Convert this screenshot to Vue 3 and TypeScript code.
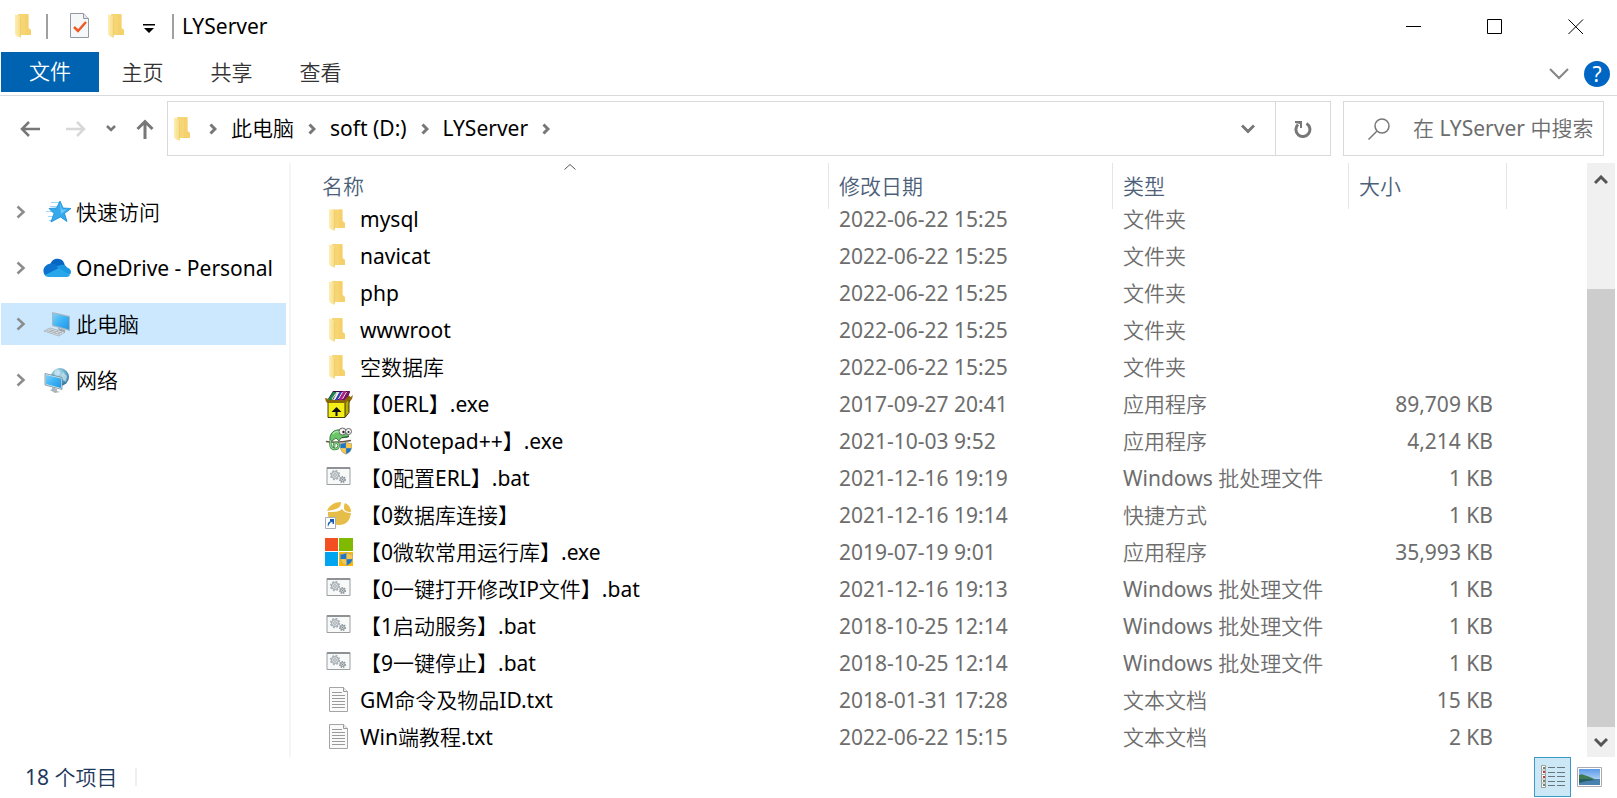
<script setup lang="ts">
import { ref } from 'vue'

interface Entry {
  name: string
  date: string
  type: string
  size: string
  icon: string
}

interface Place {
  label: string
  icon: string
}

const folderType = '文件夹'
const appType = '应用程序'
const batType = 'Windows 批处理文件'
const txtType = '文本文档'

const entries: Entry[] = [
  { name: 'mysql', date: '2022-06-22 15:25', type: folderType, size: '', icon: 'folder' },
  { name: 'navicat', date: '2022-06-22 15:25', type: folderType, size: '', icon: 'folder' },
  { name: 'php', date: '2022-06-22 15:25', type: folderType, size: '', icon: 'folder' },
  { name: 'wwwroot', date: '2022-06-22 15:25', type: folderType, size: '', icon: 'folder' },
  { name: '空数据库', date: '2022-06-22 15:25', type: folderType, size: '', icon: 'folder' },
  { name: '【0ERL】.exe', date: '2017-09-27 20:41', type: appType, size: '89,709 KB', icon: 'archive' },
  { name: '【0Notepad++】.exe', date: '2021-10-03 9:52', type: appType, size: '4,214 KB', icon: 'chameleon' },
  { name: '【0配置ERL】.bat', date: '2021-12-16 19:19', type: batType, size: '1 KB', icon: 'batch' },
  { name: '【0数据库连接】', date: '2021-12-16 19:14', type: '快捷方式', size: '1 KB', icon: 'database' },
  { name: '【0微软常用运行库】.exe', date: '2019-07-19 9:01', type: appType, size: '35,993 KB', icon: 'windows' },
  { name: '【0一键打开修改IP文件】.bat', date: '2021-12-16 19:13', type: batType, size: '1 KB', icon: 'batch' },
  { name: '【1启动服务】.bat', date: '2018-10-25 12:14', type: batType, size: '1 KB', icon: 'batch' },
  { name: '【9一键停止】.bat', date: '2018-10-25 12:14', type: batType, size: '1 KB', icon: 'batch' },
  { name: 'GM命令及物品ID.txt', date: '2018-01-31 17:28', type: txtType, size: '15 KB', icon: 'text' },
  { name: 'Win端教程.txt', date: '2022-06-22 15:15', type: txtType, size: '2 KB', icon: 'text' },
]

const places: Place[] = [
  { label: '快速访问', icon: 'star' },
  { label: 'OneDrive - Personal', icon: 'cloud' },
  { label: '此电脑', icon: 'computer' },
  { label: '网络', icon: 'network' },
]

const tabs = ['主页', '共享', '查看']
const crumbs = ['此电脑', 'soft (D:)', 'LYServer']
const selected = ref('此电脑')
const query = ref('')
</script>

<template>
  <div class="window">
    <svg class="defs" aria-hidden="true">
      <defs>
        <linearGradient id="front" x1="0" x2="1"><stop offset="0" stop-color="#fdeeb4" /><stop offset="1" stop-color="#f7dc85" /></linearGradient>
        <linearGradient id="screen" x1="0" y1="0" x2="1" y2="1"><stop offset="0" stop-color="#7fd0fb" /><stop offset="0.5" stop-color="#3db2f5" /><stop offset="1" stop-color="#2196e6" /></linearGradient>
        <linearGradient id="sky" x1="0" y1="0" x2="0" y2="1"><stop offset="0" stop-color="#5b9bea" /><stop offset="1" stop-color="#d9ebf8" /></linearGradient>
        <radialGradient id="globe" cx="0.4" cy="0.3" r="0.8"><stop offset="0" stop-color="#c4e7f5" /><stop offset="0.5" stop-color="#69abc9" /><stop offset="1" stop-color="#24648c" /></radialGradient>
      </defs>
      <symbol id="i-folder" viewBox="0 0 28 28">
        <path d="M7 2h10.500v14l2.500 2v5H9z" fill="#f6d574" />
        <path d="M14 3h3.500v13l2.500 2v5h-6z" fill="#f3cc62" opacity=".5" />
        <path d="M4 2.500 8 3.500c1 .3 1.500 1 1.500 2V26L5 23.500c-.7-.4-1-.8-1-1.500z" fill="url(#front)" />
        <path d="M9.500 6v19" stroke="#edc75c" stroke-width=".6" />
      </symbol>
      <symbol id="i-archive" viewBox="0 0 28 28">
        <path d="M3 9 8 1h17l-3 10z" fill="#371044" />
        <path d="m3 10 5-8h3l-4 8z" fill="#16884a" /><path d="m8 10 4-8h2l-4 8z" fill="#dfe5e2" /><path d="m10 10 4-8h3l-4 8z" fill="#3540b0" /><path d="m14 10 4-9h3l-4 9z" fill="#b61d91" /><path d="m18 10 4-9 3 1-4 8z" fill="#7b155f" />
        <path d="m7 9 5-7M10 9l4-7M13.500 9l4-7M17.500 9l4-7" stroke="#fff" stroke-width=".9" />
        <path d="m0 8 4 1v4l-3-1zM28 5l-5 4v5l4-5z" fill="#96700d" />
        <path d="M3 13h17v14.500H3z" fill="#f4ed16" /><path d="m20 13 4-4v13l-4 5.500z" fill="#b8a900" />
        <path d="M2 11.500h18l5-5" stroke="#8a640b" stroke-width="3" fill="none" />
        <path d="M3 13v14.500h17l4-5V10M20 13v14" stroke="#302b00" fill="none" stroke-width=".9" />
        <path d="m11.500 17-5 5h4v4h2v-4h4z" fill="#111" />
      </symbol>
      <symbol id="i-shield" viewBox="0 0 14 15">
        <path d="M7 0c2 1.500 4 2 7 2v4c0 5-3 7.500-7 9-4-1.500-7-4-7-9V2c3 0 5-.5 7-2z" fill="#a9a68c" />
        <path d="M6.800 1.200v6.300H.7V2.700c2.800 0 4.400-.5 6.100-1.500z" fill="#1e77c4" /><path d="M7.200 1.200v6.300h6.100V2.700c-2.800 0-4.400-.5-6.100-1.500z" fill="#fbc748" />
        <path d="M6.800 7.800H.9c.5 3.200 2.700 5.200 5.900 6.400z" fill="#fbc748" /><path d="M7.200 7.800h5.900c-.5 3.200-2.700 5.200-5.900 6.400z" fill="#1e77c4" />
      </symbol>
      <symbol id="i-chameleon" viewBox="0 0 28 28">
        <path d="M1 14.500c9 1.500 17 .5 25-1" stroke="#6a5445" stroke-width="1.500" fill="none" />
        <path d="M5 13C4 7 9 2 15 3l6 3c3 1 3 3 2 4l-7 1-2 3-3-3-4 3z" fill="#69c768" stroke="#315b35" stroke-width=".8" />
        <path d="M6 13c-2 5 0 9 4 9s5-5 2-6c-3-1-4 3-2 4" stroke="#427e45" stroke-width="2.500" fill="none" />
        <path d="M6 13c-2 5 0 9 4 9s5-5 2-6c-3-1-4 3-2 4" stroke="#87d68a" stroke-width="1.200" fill="none" />
        <path d="M8 7c2-3 5-3 7-1" stroke="#a7eca0" stroke-width="1.500" fill="none" />
        <circle cx="17.500" cy="4.500" r="3.500" fill="#f4f4f4" stroke="#666" /><circle cx="23.500" cy="4.500" r="3" fill="#f4f4f4" stroke="#666" /><circle cx="18.500" cy="5" r="1.200" fill="#222" /><circle cx="23.500" cy="5" r="1" fill="#222" />
        <path d="m17 10.500 7-1" stroke="#2b5632" /><use href="#i-shield" x="15" y="14" width="12" height="14" />
      </symbol>
      <symbol id="i-batch" viewBox="0 0 28 28">
        <path d="M2 3.500h23v17H2z" fill="#f8fafa" stroke="#9a9ea1" /><path d="M2 4h23" stroke="#8e9295" stroke-width="2" />
        <circle cx="10" cy="11" r="4.200" fill="#d5dbdf" stroke="#aab1b5" stroke-width="2" stroke-dasharray="1.800 1.500" /><circle cx="10" cy="11" r="3.400" fill="#dce2e5" stroke="#a1aaaf" /><circle cx="10" cy="11" r="1.300" fill="#fff" stroke="#9da5aa" />
        <circle cx="17.500" cy="15.500" r="2.800" fill="#c2c9cc" stroke="#929b9f" stroke-width="1.500" stroke-dasharray="1.400 1" /><circle cx="17.500" cy="15.500" r="1.800" fill="#d9dfe1" stroke="#8f999e" /><circle cx="17.500" cy="15.500" r=".6" fill="#777" />
      </symbol>
      <symbol id="i-database" viewBox="0 0 28 28">
        <path d="M2 10C4 5 9 1 16 1c0 4-2 6-5 7-3 1.500-6 1-9 2z" fill="#e9bd45" /><path d="M20 2c4 2 6 5 6 9-4 0-7-1-7-4 0-2 0-3 1-5z" fill="#e9bd45" />
        <path d="M3 11c6 0 11 0 14-3 2 3 5 4 9 4-1 8-5 12-12 12C7 24 2 18 3 11z" fill="#e7bd49" />
        <path d="M.5 16.500h10v11H.5z" fill="#fff" stroke="#a7adb5" /><path d="M3 26c-1-4 1-6 4-6h-2v-2h4v5H7.500v-2C5 21 4 23 3 26z" fill="#185cad" />
      </symbol>
      <symbol id="i-windows" viewBox="0 0 28 28">
        <path d="M0 0h13v13H0z" fill="#f25022" /><path d="M14 0h14v13H14z" fill="#7fba00" /><path d="M0 14h13v14H0z" fill="#00a4ef" /><path d="M14 14h14v14H14z" fill="#ffb900" /><use href="#i-shield" x="15" y="14" width="13" height="14" />
      </symbol>
      <symbol id="i-text" viewBox="0 0 28 28">
        <path d="M4.500 1.500h14l4 4v20h-18z" fill="#fafafa" stroke="#a5a5a5" /><path d="M18.500 1.500v4h4" fill="#eee" stroke="#999" />
        <path d="M7 6.500h10M7 9.500h13M7 12.500h13M7 15.500h13M7 18.500h13M7 21.500h13" stroke="#9b9b9b" />
      </symbol>
      <symbol id="i-star" viewBox="0 0 28 28">
        <path d="M8 4.500h9M7 8.500h7M3 13.500h6M5 18.500h5M6 22.500h4" stroke="#9ed6f7" stroke-width="1.200" />
        <path d="m17 3 3 7 8 .5-6.500 5 2.500 8-6.500-4.500L8 24l3-8.500-5-5 7.500-.5z" fill="#36a9ec" stroke="#168bd4" stroke-width=".8" /><path d="m17 5 2 6.500h5L18 16z" fill="#6ac9fa" />
      </symbol>
      <symbol id="i-cloud" viewBox="0 0 28 28">
        <path d="M7 12C8 6 12 4 16 5c4 .5 5 3 6 7z" fill="#0766c2" /><path d="M6 10c3-1 6 0 8 1.500L18 18 3 22c-5-4-2-11 3-12z" fill="#0e73ce" /><path d="M14 12.500c4-3 9-2 10 1 4 1 5 5 3 7L17 19z" fill="#1997e3" /><path d="m2 21 14-7 11 7c-1 2-3 2-5 2H7c-2 0-4 0-5-2z" fill="#28a8ea" />
      </symbol>
      <symbol id="i-computer" viewBox="0 0 28 28">
        <path d="m9 2 18 4v15L9 16z" fill="#a7b6bf" /><path d="m10 3.500 16 3.500v12.500L10 15z" fill="url(#screen)" /><path d="m15 18 7 2v3h-5z" fill="#9ba4aa" />
        <path d="m1 21 6-3 15 4-6 4z" fill="#dce1e4" stroke="#9da9b0" stroke-width=".7" /><path d="m4 20.500 13 4M6 19.500l13 3.500M7 22l4-2.500M11 23l4-2.500M15 24l4-2.500" stroke="#9aa5ac" stroke-width=".7" />
      </symbol>
      <symbol id="i-network" viewBox="0 0 28 28">
        <circle cx="17" cy="11" r="9" fill="url(#globe)" /><path d="M12 4c3-2 6 1 5 4l-4 2-2-3zM20 6l4 4-1 6-3-2-2-4z" fill="#c7e5ef" opacity=".7" />
        <path d="m2 7.500 17 4v12L2 19z" fill="#d7e4e9" stroke="#62828f" stroke-width=".7" /><path d="m3 9 15 3.500V22L3 18z" fill="url(#screen)" /><path d="m9 21 5 2v2l3 1-5 1-5-3 2-1z" fill="#aab6bc" />
      </symbol>
    </svg>

    <header class="titlebar">
      <svg class="icon first" aria-hidden="true"><use href="#i-folder" /></svg>
      <span class="rule"></span>
      <button class="plain check" aria-label="属性">
        <svg width="20" height="26" viewBox="0 0 20 26"><path d="M.5.5h13l5 5v19H.5z" fill="#f6f7f9" stroke="#9299a0" /><path d="M13.500.5v5h5" fill="#e3e7ec" stroke="#9299a0" /><path d="m4 14 4 4 8-9" fill="none" stroke="#f15a24" stroke-width="2.500" /></svg>
      </button>
      <button class="plain new" aria-label="新建文件夹"><svg class="icon"><use href="#i-folder" /></svg></button>
      <button class="plain more" aria-label="自定义快速访问工具栏"><svg width="12" height="10" viewBox="0 0 12 10"><path d="M0 0h12v1.500H0zM1 4h10L6 9z" /></svg></button>
      <span class="rule"></span>
      <h1>LYServer</h1>
      <div class="controls">
        <button aria-label="最小化"><svg width="16" height="16" viewBox="0 0 16 16"><path d="M0 7.500h15" /></svg></button>
        <button aria-label="最大化"><svg width="16" height="16" viewBox="0 0 16 16"><path d="M.5.5h14v14H.5z" /></svg></button>
        <button aria-label="关闭"><svg width="16" height="16" viewBox="0 0 16 16"><path d="m.5.5 14.500 14.500M15 .5.5 15" /></svg></button>
      </div>
    </header>

    <nav class="ribbon" aria-label="功能区">
      <button class="file">文件</button>
      <button v-for="tab in tabs" :key="tab" class="tab">{{ tab }}</button>
      <button class="plain expand" aria-label="展开功能区"><svg width="20" height="12" viewBox="0 0 20 12"><path d="m1 1 9 9 9-9" fill="none" stroke="#858585" stroke-width="2" /></svg></button>
      <button class="help" aria-label="帮助">?</button>
    </nav>

    <div class="addressrow">
      <div class="history">
        <button class="plain" aria-label="后退"><svg width="20" height="18" viewBox="0 0 20 18"><path d="M20 9H2m7-7L2 9l7 7" fill="none" stroke="#777" stroke-width="2.500" /></svg></button>
        <button class="plain" aria-label="前进"><svg width="20" height="18" viewBox="0 0 20 18"><path d="M0 9h18m-7-7 7 7-7 7" fill="none" stroke="#d8d8d8" stroke-width="2.500" /></svg></button>
        <button class="plain" aria-label="最近浏览的位置"><svg width="10" height="8" viewBox="0 0 10 8"><path d="m1 1 4 4 4-4" fill="none" stroke="#777" stroke-width="2.500" /></svg></button>
        <button class="plain" aria-label="向上"><svg width="18" height="20" viewBox="0 0 18 20"><path d="M9 20V2M1.500 10 9 2.500l7.500 7.500" fill="none" stroke="#777" stroke-width="3" /></svg></button>
      </div>
      <div class="address">
        <svg class="icon" aria-hidden="true"><use href="#i-folder" /></svg>
        <svg class="chev lead" viewBox="0 0 8 12" aria-hidden="true"><path d="m1.500 1.500 4.500 4.500-4.500 4.500" /></svg>
        <template v-for="crumb in crumbs" :key="crumb">
          <button class="plain crumb">{{ crumb }}</button>
          <svg class="chev" viewBox="0 0 8 12" aria-hidden="true"><path d="m1.500 1.500 4.500 4.500-4.500 4.500" /></svg>
        </template>
        <button class="plain drop" aria-label="以前的位置"><svg width="14" height="10" viewBox="0 0 14 10"><path d="m1 1.500 6 6 6-6" fill="none" stroke="#777" stroke-width="3" /></svg></button>
        <button class="plain refresh" aria-label="刷新"><svg width="18" height="18" viewBox="0 0 18 18"><path d="M12.500 3.500A7 7 0 1 1 4 4.500" fill="none" stroke="#777" stroke-width="3" /><path d="M1 1h7v7H6V4L1 3z" fill="#777" /></svg></button>
      </div>
      <label class="search">
        <svg width="22" height="22" viewBox="0 0 22 22" aria-hidden="true"><circle cx="14" cy="8" r="7" /><path d="m9 13-8.500 8.500" /></svg>
        <input v-model="query" type="text" aria-label="搜索" placeholder="在 LYServer 中搜索" />
      </label>
    </div>

    <div class="content">
      <aside class="sidebar">
        <button v-for="place in places" :key="place.label" :class="['place', { on: selected === place.label }]" @click="selected = place.label">
          <svg class="arrow" viewBox="0 0 10 14" aria-hidden="true"><path d="m1.500 1.500 6 5.500-6 5.500" /></svg>
          <svg class="icon" aria-hidden="true"><use :href="'#i-' + place.icon" /></svg>
          <span>{{ place.label }}</span>
        </button>
      </aside>

      <table class="files">
        <thead>
          <tr>
            <th scope="col"><svg class="sort" viewBox="0 0 12 6" aria-hidden="true"><path d="m.5 5.500 5.500-5 5.500 5" /></svg>名称</th>
            <th scope="col">修改日期</th>
            <th scope="col">类型</th>
            <th scope="col">大小</th>
          </tr>
        </thead>
        <tbody>
          <tr v-for="entry in entries" :key="entry.name">
            <td class="name"><svg class="icon" aria-hidden="true"><use :href="'#i-' + entry.icon" /></svg><span>{{ entry.name }}</span></td>
            <td>{{ entry.date }}</td>
            <td>{{ entry.type }}</td>
            <td class="size">{{ entry.size }}</td>
          </tr>
        </tbody>
      </table>

      <div class="scrollbar">
        <button class="plain" aria-label="向上滚动"><svg width="14" height="10" viewBox="0 0 14 10"><path d="m1 8 6-6 6 6" /></svg></button>
        <div class="track"><div class="thumb"></div></div>
        <button class="plain" aria-label="向下滚动"><svg width="14" height="10" viewBox="0 0 14 10"><path d="m1 2 6 6 6-6" /></svg></button>
      </div>
    </div>

    <footer class="status">
      <span class="count">18 个项目</span>
      <button class="view on" aria-label="详细信息">
        <svg width="26" height="26" viewBox="0 0 26 26"><path d="M1.500 1.500h4v22h-4z" fill="#fff" stroke="#9c9c9c" /><path d="M1 6h5M1 10.500h5M1 15h5M1 19h5" stroke="#aaa" /><path d="M3 3h2v2H3zM3 16h2v2H3zM3 20h2v2H3z" fill="#6a8a6a" /><path d="M3 7h2v2H3zM3 12h2v2H3z" fill="#c43b32" /><path d="M8 3.500h7M17 3.500h8M8 8.500h7M17 8.500h8M8 12.500h7M17 12.500h8M8 17.500h7M17 17.500h8M8 21.500h7M17 21.500h8" stroke="#69777d" /></svg>
      </button>
      <button class="view" aria-label="大缩略图">
        <svg width="25" height="20" viewBox="0 0 25 20"><path d="M.5.5h24v19H.5z" fill="#fff" stroke="#aaa9b4" /><path d="M2 2h21v16H2z" fill="url(#sky)" /><path d="M2 8c3-2 5 0 8 1s6 2 9 4H2z" fill="#3e7b53" /><path d="M2 12h21v6H2z" fill="#4a82ae" /><path d="M2 12h12l5 1-9 1-8 2z" fill="#255f63" /></svg>
      </button>
    </footer>
  </div>
</template>

<style>
body {
  margin: 0;
  background: #fff;
}
</style>

<style scoped>
.window {
  display: flex;
  flex-direction: column;
  min-height: 100vh;
  background: #fff;
  color: #000;
  font-family: "Noto Sans", "Noto Sans CJK SC DemiLight", "Noto Sans CJK SC Light", "Noto Sans CJK SC", sans-serif;
  font-size: 21px;
  line-height: 28px;
}
.defs {
  position: absolute;
  width: 0;
  height: 0;
}
button {
  margin: 0;
  padding: 0;
  border: 0;
  background: none;
  color: inherit;
  font: inherit;
  white-space: nowrap;
}
svg {
  display: block;
  flex: none;
}
.plain {
  display: flex;
  align-items: center;
  justify-content: center;
}
.icon {
  width: 28px;
  height: 28px;
}

.titlebar {
  display: flex;
  align-items: center;
  height: 52px;
  padding-left: 11px;
}
.rule {
  width: 2px;
  height: 25px;
  background: #a0a0a0;
}
.first {
  margin-right: 7px;
}
.check {
  margin-left: 22px;
}
.new {
  margin-left: 14px;
}
.more {
  margin: 0 17px 0 11px;
  padding-top: 6px;
}
h1 {
  flex: 1;
  margin: 0 0 0 8px;
  font-size: 21px;
  font-weight: 400;
}
.controls {
  display: flex;
  align-self: stretch;
  padding: 2px 1px 0 0;
}
.controls button {
  display: flex;
  align-items: center;
  justify-content: center;
  width: 81px;
}
.controls svg {
  fill: none;
  stroke: #000;
}

.ribbon {
  display: flex;
  align-items: center;
  height: 43px;
  padding: 0 7px 0 1px;
  border-bottom: 1px solid #d9dadb;
  color: #333;
}
.file,
.tab {
  align-self: flex-start;
  height: 40px;
}
.file {
  width: 98px;
  padding-bottom: 2px;
  background: #0063b1;
  color: #fff;
}
.tab {
  width: 89px;
  padding-right: 2px;
}
.expand {
  margin-left: auto;
}
.help {
  width: 26px;
  height: 26px;
  margin-left: 15px;
  border-radius: 50%;
  background: #0066c4;
  color: #fff;
  line-height: 26px;
}

.addressrow {
  display: flex;
  height: 55px;
  margin-top: 5px;
  padding-right: 13px;
}
.history {
  display: flex;
  align-items: center;
  gap: 20px;
  width: 147px;
  padding-left: 20px;
}
.history button:nth-child(2) {
  margin-left: 6px;
}
.address {
  display: flex;
  flex: 1;
  align-items: center;
  border: 1px solid #d9d9d9;
  padding-left: 2px;
}
.chev {
  width: 8px;
  height: 12px;
  margin-left: 14px;
  fill: none;
  stroke: #777;
  stroke-width: 3;
}
.chev.lead {
  margin-left: 11px;
}
.crumb {
  margin-left: 14px;
  padding-bottom: 2px;
}
.drop {
  width: 54px;
  height: 100%;
  margin-left: auto;
}
.refresh {
  width: 55px;
  height: 100%;
  border-left: 1px solid #d9d9d9;
}
.search {
  display: flex;
  align-items: center;
  width: 235px;
  margin-left: 12px;
  padding-left: 24px;
  border: 1px solid #d9d9d9;
}
.search svg {
  fill: none;
  stroke: #777;
  stroke-width: 1.5;
}
.search input {
  flex: 1;
  min-width: 0;
  margin-left: 23px;
  padding: 0 0 2px;
  border: 0;
  outline: 0;
  background: none;
  font: inherit;
}
.search input::placeholder {
  color: #6d6d6d;
  opacity: 1;
}

.content {
  display: flex;
  flex: 1;
  margin-top: 7px;
}
.sidebar {
  display: flex;
  flex: none;
  flex-direction: column;
  gap: 14px;
  width: 289px;
  padding: 28px 0 0 1px;
  box-sizing: border-box;
}
.place {
  display: flex;
  align-items: center;
  height: 42px;
  margin-right: 3px;
  padding-left: 15px;
}
.place.on {
  background: #cce8ff;
}
.arrow {
  width: 10px;
  height: 14px;
  margin-right: 17px;
  fill: none;
  stroke: #8c8c8c;
  stroke-width: 2.5;
}
.place span {
  margin-left: 5px;
}

.files {
  display: flex;
  flex: 1;
  flex-direction: column;
  padding-left: 21px;
  border-left: 2px solid #f5f5f5;
}
thead,
tbody {
  display: block;
}
tr {
  display: grid;
  grid-template-columns: 517fr 284fr 236fr 158fr 80fr;
  height: 37px;
}
thead tr {
  height: 46px;
}
/* The list is scrolled 8px into its first visible row. */
tbody tr:first-child {
  margin-top: -8px;
}
tbody tr:first-child .icon {
  clip-path: inset(5px 0 0);
}
th,
td {
  display: flex;
  align-items: center;
  padding: 0 10px;
  line-height: 18px;
  white-space: nowrap;
  color: #6d6d6d;
}
th {
  position: relative;
  border-right: 1px solid #e5e5e5;
  color: #4c607a;
  font-weight: 400;
}
td {
  padding-bottom: 2px;
}
.sort {
  position: absolute;
  top: 1px;
  left: calc(50% - 6px);
  width: 12px;
  height: 6px;
  fill: none;
  stroke: #555;
}
.name {
  padding-left: 13px;
  color: #000;
}
.name span {
  margin-left: 7px;
}
.size {
  justify-content: flex-end;
  padding-right: 14px;
}

.scrollbar {
  display: flex;
  flex: none;
  flex-direction: column;
  width: 28px;
  margin-right: 2px;
  background: #f0f0f0;
}
.scrollbar button {
  height: 30px;
}
.scrollbar button:first-child {
  align-items: flex-end;
  padding-bottom: 8px;
  box-sizing: border-box;
}
.scrollbar svg {
  fill: none;
  stroke: #555;
  stroke-width: 3;
}
.track {
  display: grid;
  flex: 1;
  grid-template-rows: 96fr 438fr;
}
.thumb {
  grid-row: 2;
  background: #cdcdcd;
}

.status {
  display: flex;
  align-items: flex-start;
  height: 41px;
  padding: 0 10px 0 25px;
  color: #1e395b;
}
.count {
  margin: 6px auto 0 0;
  padding-right: 20px;
  background: linear-gradient(#f0f0f0, #f0f0f0) right center / 2px 18px no-repeat;
}
.view {
  display: flex;
  align-items: center;
  justify-content: center;
  width: 36px;
  height: 40px;
}
.view.on {
  box-sizing: border-box;
  width: 37px;
  border: 1px solid #3d9ac6;
  background: #cce8f6;
}
</style>
